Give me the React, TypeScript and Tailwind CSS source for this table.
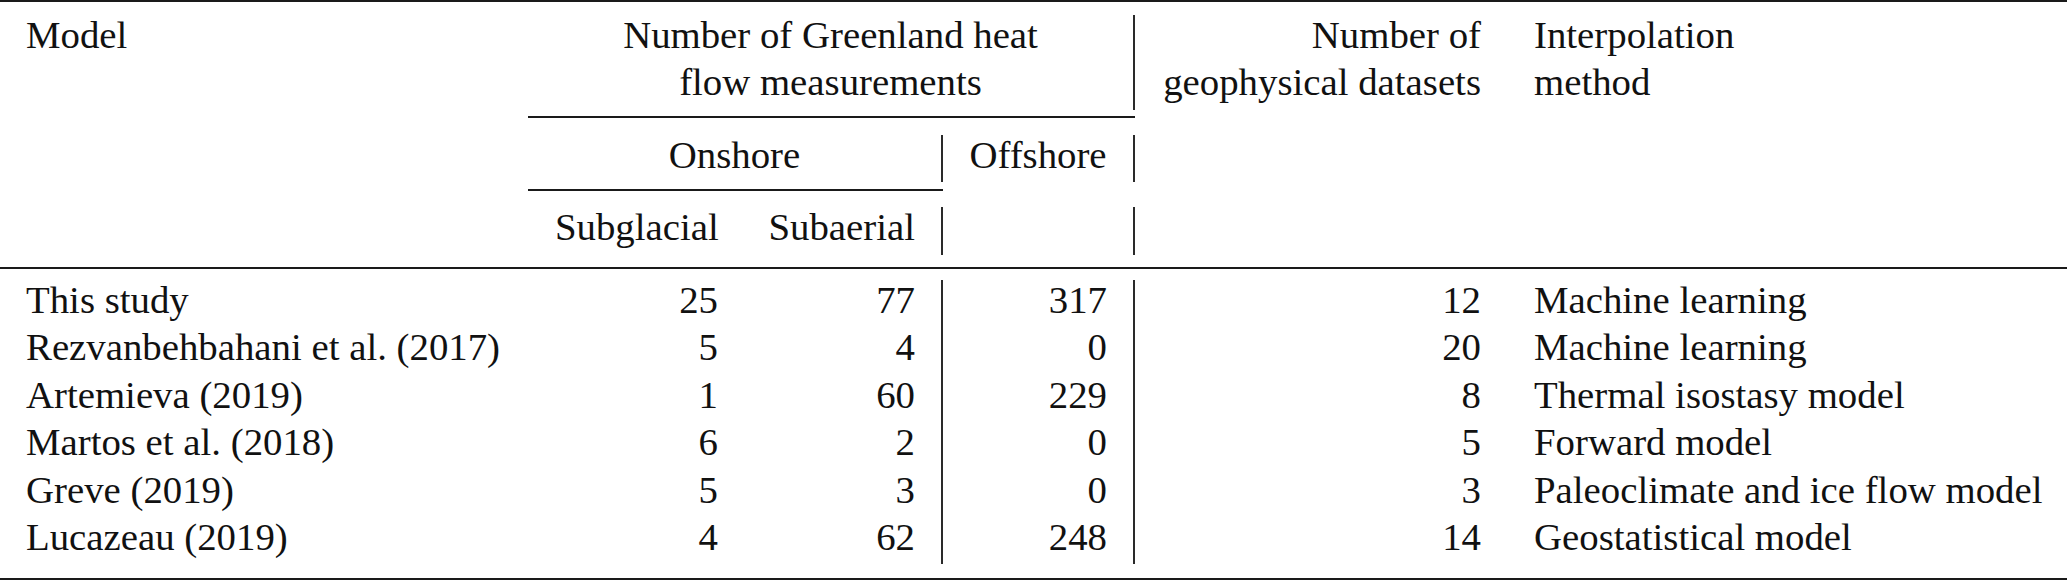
import React from "react";

const GRID = "grid grid-cols-[528px_217px_198px_192px_372px_1fr]";
const RULE = "border-[#1a1a1a]";
const VLINE = "border-r-2 border-[#2a2a2a]";

const rows = [
  ["This study", "25", "77", "317", "12", "Machine learning"],
  ["Rezvanbehbahani et al. (2017)", "5", "4", "0", "20", "Machine learning"],
  ["Artemieva (2019)", "1", "60", "229", "8", "Thermal isostasy model"],
  ["Martos et al. (2018)", "6", "2", "0", "5", "Forward model"],
  ["Greve (2019)", "5", "3", "0", "3", "Paleoclimate and ice flow model"],
  ["Lucazeau (2019)", "4", "62", "248", "14", "Geostatistical model"],
];

// text sits a bit high in its line, like a LaTeX strut
function T({ children }: { children: React.ReactNode }) {
  return <span className="block -translate-y-[3.8px] whitespace-nowrap">{children}</span>;
}

export default function App() {
  return (
    <div className="w-[2067px] h-[580px] bg-white font-['Times_New_Roman','Liberation_Serif',Times,serif] text-[38.8px] leading-[47.4px] text-[#111]">
      <div className={`${GRID} border-t-2 border-b-2 ${RULE}`}>
        <div className="row-span-3 pt-[13px] pl-[26px]">
          <T>Model</T>
        </div>
        <div className={`col-span-3 pt-[13px] pb-[6px] border-b-2 ${RULE}`}>
          <div className={`${VLINE} text-center`}>
            <T>Number of Greenland heat</T>
            <T>flow measurements</T>
          </div>
        </div>
        <div className="row-span-3 pt-[13px] pl-[27px] pr-[26px] text-right">
          <T>Number of</T>
          <T>geophysical datasets</T>
        </div>
        <div className="row-span-3 pt-[13px] pl-[27px]">
          <T>Interpolation</T>
          <T>method</T>
        </div>

        <div className={`col-span-2 pt-[17px] pb-[7px] border-b-2 ${RULE}`}>
          <div className={`${VLINE} text-center`}>
            <T>Onshore</T>
          </div>
        </div>
        <div className="pt-[17px] pb-[7px]">
          <div className={`${VLINE} text-center`}>
            <T>Offshore</T>
          </div>
        </div>

        <div className="pt-[16px] pb-[12px]">
          <div className="px-[27px] text-right">
            <T>Subglacial</T>
          </div>
        </div>
        <div className="pt-[16px] pb-[12px]">
          <div className={`${VLINE} pr-[26px] text-right`}>
            <T>Subaerial</T>
          </div>
        </div>
        <div className="pt-[16px] pb-[12px]">
          <div className={`${VLINE} h-[47.4px]`} />
        </div>
      </div>

      <div className={`${GRID} pt-[11.4px] pb-[13.6px] border-b-2 ${RULE}`}>
        {rows.map((r) => (
          <React.Fragment key={r[0]}>
            <div className="pl-[26px]">
              <T>{r[0]}</T>
            </div>
            <div className="pr-[27px] text-right">
              <T>{r[1]}</T>
            </div>
            <div className={`${VLINE} pr-[26px] text-right`}>
              <T>{r[2]}</T>
            </div>
            <div className={`${VLINE} pr-[26px] text-right`}>
              <T>{r[3]}</T>
            </div>
            <div className="pr-[26px] text-right">
              <T>{r[4]}</T>
            </div>
            <div className="pl-[27px]">
              <T>{r[5]}</T>
            </div>
          </React.Fragment>
        ))}
      </div>
    </div>
  );
}
